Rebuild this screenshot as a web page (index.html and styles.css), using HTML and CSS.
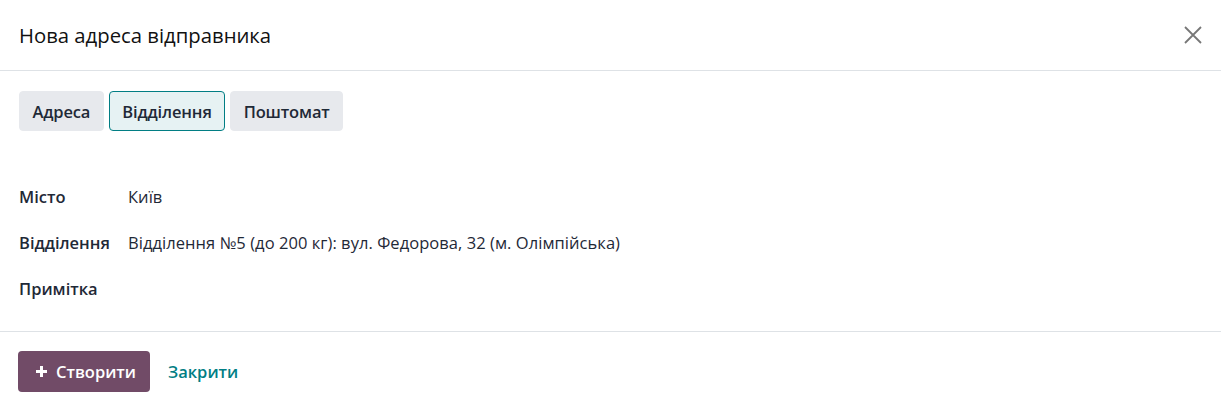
FILE: index.html
```html
<!DOCTYPE html>
<html lang="uk">
<head>
<meta charset="utf-8">
<link rel="stylesheet" href="styles.css">
</head>
<body>
<div class="dialog">
  <header class="dlg-header">
    <h4 class="dlg-title">Нова адреса відправника</h4>
    <button class="btn-close" aria-label="Закрити">
      <svg width="20" height="20" viewBox="0 0 20 20"><path d="M2 2 L18 18 M18 2 L2 18" stroke="#777" stroke-width="1.8" fill="none"/></svg>
    </button>
  </header>
  <main class="dlg-body">
    <div class="tabs">
      <button class="tab">Адреса</button>
      <button class="tab active">Відділення</button>
      <button class="tab">Поштомат</button>
    </div>
    <div class="fields">
      <div class="label">Місто</div><div class="value">Київ</div>
      <div class="label">Відділення</div><div class="value">Відділення №5 (до 200 кг): вул. Федорова, 32 (м. Олімпійська)</div>
      <div class="label">Примітка</div><div class="value"></div>
    </div>
  </main>
  <footer class="dlg-footer">
    <button class="btn-primary"><svg class="plus" width="13" height="13" viewBox="0 0 13 13"><path d="M6.5 1 V12 M1 6.5 H12" stroke="#fff" stroke-width="3" fill="none"/></svg>Створити</button>
    <button class="btn-link">Закрити</button>
  </footer>
</div>
</body>
</html>
```
FILE: styles.css
```css
html, body { margin: 0; padding: 0; background: #fff; }
body { font-family: "Open Sans", "Noto Sans", sans-serif; color: #111827; font-size: 16.5px; line-height: 24px; }
.dialog { width: 1221px; }
.dlg-header { height: 71px; border-bottom: 1px solid #dee2e6; display: flex; align-items: center; justify-content: space-between; padding: 0 18px 0 19px; box-sizing: border-box; }
.dlg-title { margin: 0; font-size: 20.3px; font-weight: 500; color: #111; }
.btn-close { background: none; border: 0; padding: 0; display: flex; cursor: pointer; }
.dlg-body { padding: 20px 19px 0 19px; height: 260px; box-sizing: border-box; }
.tabs { display: flex; gap: 5px; }
.tab { font-family: inherit; font-size: 16.5px; font-weight: 600; letter-spacing: -0.15px; color: #1f2937; height: 40px; padding: 0 12.5px; border: 1px solid #e7e9ed; background: #e7e9ed; border-radius: 4px; }
.tab.active { background: #e6f2f3; border-color: #017e84; }
.fields { display: grid; grid-template-columns: 109px 1fr; grid-auto-rows: 46px; margin-top: 54px; align-items: start; }
.label { font-weight: 600; color: #1f2937; }
.value { color: #1f2937; letter-spacing: 0.05px; }
.dlg-footer { border-top: 1px solid #dee2e6; padding: 19px 18px; display: flex; align-items: center; gap: 4px; }
.btn-primary { font-family: inherit; font-size: 16.5px; font-weight: 600; color: #fff; background: #714b67; border: 0; border-radius: 4px; height: 41px; padding: 0 14px 0 17px; display: flex; align-items: center; gap: 8px; }
.btn-link { font-family: inherit; font-size: 16.5px; font-weight: 600; color: #017e84; background: none; border: 0; padding: 0 14px; }
```
